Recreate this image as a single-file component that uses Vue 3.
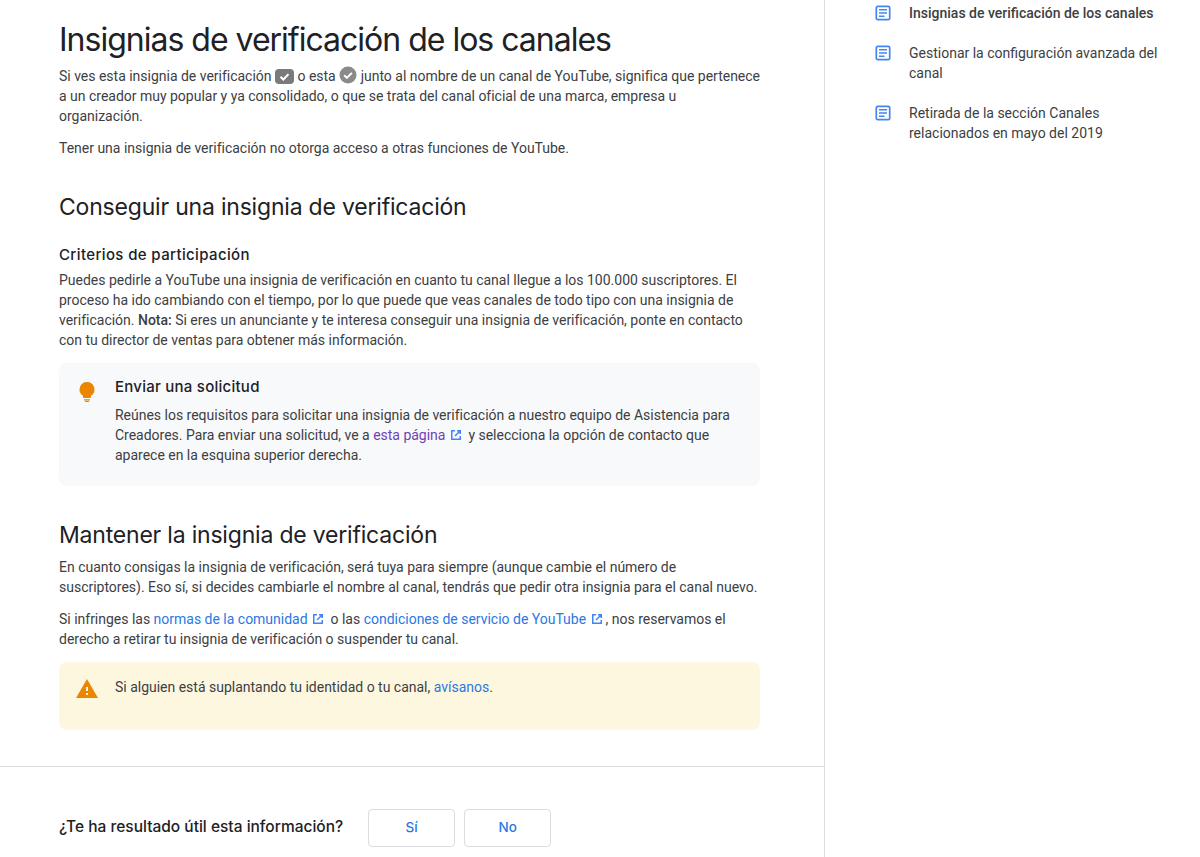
<script setup>
const related = [
  { text: 'Insignias de verificación de los canales', current: true },
  { text: 'Gestionar la configuración avanzada del canal', current: false },
  { text: 'Retirada de la sección Canales relacionados en mayo del 2019', current: false }
]
</script>

<template>
  <div class="page">
    <main class="main">
      <article class="article">
        <h1>Insignias de verificación de los canales</h1>
        <p class="intro">
          Si ves esta insignia de verificación
          <svg class="badge" width="19" height="15" viewBox="0 0 19 15"><rect width="19" height="15" rx="4" fill="#7a7a7a"/><path d="M5.500 7.700l2.800 2.800 5.200-5.400" fill="none" stroke="#fff" stroke-width="2"/></svg>
          o esta
          <svg class="badge" width="18" height="18" viewBox="0 0 18 18"><circle cx="9" cy="9" r="8.500" fill="#8a8a8a"/><path d="M5.200 9.200l2.700 2.700 5-5" fill="none" stroke="#fff" stroke-width="2"/></svg>
          junto al nombre de un canal de YouTube, significa que pertenece a un creador muy popular y ya consolidado, o que se trata del canal oficial de una marca, empresa u organización.
        </p>
        <p class="tight">Tener una insignia de verificación no otorga acceso a otras funciones de YouTube.</p>

        <h2 class="first-h2">Conseguir una insignia de verificación</h2>
        <h3>Criterios de participación</h3>
        <p class="tight">Puedes pedirle a YouTube una insignia de verificación en cuanto tu canal llegue a los 100.000 suscriptores. El proceso ha ido cambiando con el tiempo, por lo que puede que veas canales de todo tipo con una insignia de verificación. <strong>Nota:</strong> Si eres un anunciante y te interesa conseguir una insignia de verificación, ponte en contacto con tu director de ventas para obtener más información.</p>

        <section class="callout tip">
          <svg class="callout-icon" width="24" height="24" viewBox="0 0 24 24"><path fill="#ea8600" d="M12 3a7.500 7.500 0 0 0-4 13.800V18a1 1 0 0 0 1 1h6a1 1 0 0 0 1-1v-1.200A7.500 7.500 0 0 0 12 3zM9 20.200h6V21.400H9zM10 22h4v1h-4z"/></svg>
          <div class="callout-body">
            <h4>Enviar una solicitud</h4>
            <p>Reúnes los requisitos para solicitar una insignia de verificación a nuestro equipo de Asistencia para Creadores. Para enviar una solicitud, ve a <a class="visited">esta página<svg class="ext" width="12" height="12" viewBox="0 0 12 12"><path fill="none" stroke="#4285f4" stroke-width="1.500" d="M5 1.750H1.750v8.500h8.500V7M7 1.750h3.250V5M10.250 1.750L5 7"/></svg></a> y selecciona la opción de contacto que aparece en la esquina superior derecha.</p>
          </div>
        </section>

        <h2 class="second-h2">Mantener la insignia de verificación</h2>
        <p>En cuanto consigas la insignia de verificación, será tuya para siempre (aunque cambie el número de suscriptores). Eso sí, si decides cambiarle el nombre al canal, tendrás que pedir otra insignia para el canal nuevo.</p>
        <p class="tight">Si infringes las <a>normas de la comunidad<svg class="ext" width="12" height="12" viewBox="0 0 12 12"><path fill="none" stroke="#4285f4" stroke-width="1.500" d="M5 1.750H1.750v8.500h8.500V7M7 1.750h3.250V5M10.250 1.750L5 7"/></svg></a> o las <a>condiciones de servicio de YouTube<svg class="ext" width="12" height="12" viewBox="0 0 12 12"><path fill="none" stroke="#4285f4" stroke-width="1.500" d="M5 1.750H1.750v8.500h8.500V7M7 1.750h3.250V5M10.250 1.750L5 7"/></svg></a>, nos reservamos el derecho a retirar tu insignia de verificación o suspender tu canal.</p>

        <section class="callout warn">
          <svg class="callout-icon" width="24" height="24" viewBox="0 0 24 24"><path fill="#ea8600" d="M1 21h22L12 2 1 21zm12-3h-2v-2h2v2zm0-4h-2v-4h2v4z"/></svg>
          <div class="callout-body"><p>Si alguien está suplantando tu identidad o tu canal, <a>avísanos</a>.</p></div>
        </section>
      </article>

      <footer class="feedback">
        <span class="question">¿Te ha resultado útil esta información?</span>
        <button type="button">Sí</button>
        <button type="button">No</button>
      </footer>
    </main>

    <aside class="aside">
      <ul>
        <li v-for="item in related" :key="item.text" :class="{ current: item.current }">
          <svg width="18" height="18" viewBox="0 0 18 18"><rect x="2.300" y="2.300" width="13.400" height="13.400" rx="1.500" fill="none" stroke="#4285f4" stroke-width="1.700"/><path fill="#4285f4" d="M5 5h8v1.600H5zM5 8.200h8v1.600H5zM5 11.400h5.500V13H5z"/></svg>
          <span>{{ item.text }}</span>
        </li>
      </ul>
    </aside>
  </div>
</template>

<style scoped>
.page {
  display: flex;
  height: 857px;
  overflow: hidden;
  background: #fff;
  font-family: Roboto, "Liberation Sans", sans-serif;
  font-size: 14px;
  line-height: 20px;
  color: #3c4043;
}
.main {
  width: 825px;
  flex: none;
  box-sizing: border-box;
  border-right: 1px solid #dadce0;
}
.article {
  box-sizing: border-box;
  height: 767px;
  padding: 20px 64px 0 59px;
  border-bottom: 1px solid #dadce0;
  letter-spacing: -0.01px;
}
h1 {
  margin: 0 0 6px;
  font-family: Inter, sans-serif;
  font-size: 32px;
  line-height: 40px;
  font-weight: 400;
  letter-spacing: -1px;
  color: #202124;
}
h2 {
  margin: 0;
  font-family: Inter, sans-serif;
  font-size: 23px;
  line-height: 32px;
  font-weight: 400;
  letter-spacing: -0.2px;
  color: #202124;
}
h3, h4 {
  margin: 0;
  font-family: Inter, sans-serif;
  font-size: 15px;
  line-height: 24px;
  font-weight: 500;
  letter-spacing: 0.25px;
  color: #202124;
}
p { margin: 0 0 12px; }
.intro { margin-bottom: 12px; }
.tight { margin-bottom: 0; }
.first-h2 { margin-top: 33px; }
h3 { margin-top: 20px; margin-bottom: 3px; letter-spacing: 0.37px; }
strong { font-weight: 500; }
a { color: #2b78e4; }
a.visited { color: #6f42b8; }
.badge { vertical-align: -3px; }
.ext { vertical-align: -1px; margin: 0 3px 0 4.500px; }
.callout {
  display: flex;
  box-sizing: border-box;
  border-radius: 8px;
}
.callout p { margin: 0; }
.callout-icon { flex: none; margin-left: 16px; margin-right: 16px; }
.tip {
  margin-top: 13px;
  height: 123px;
  padding-top: 12px;
  background: #f8f9fa;
}
.tip .callout-icon { margin-top: 4px; }
.tip h4 { margin-bottom: 6px; }
.warn {
  margin-top: 13px;
  height: 68px;
  padding-top: 15px;
  background: #fef7e0;
}
.second-h2 { margin-top: 33px; margin-bottom: 6px; }
.feedback {
  display: flex;
  align-items: center;
  padding: 42px 0 0 59px;
}
.question {
  font-family: Inter, sans-serif;
  font-size: 15.500px;
  line-height: 38px;
  font-weight: 500;
  color: #202124;
  margin: -2px 25px 0 0;
  white-space: nowrap;
}
button {
  width: 87px;
  height: 38px;
  margin-right: 9px;
  padding: 0 0 2px;
  background: #fff;
  border: 1px solid #dadce0;
  border-radius: 4px;
  color: #2b78e4;
  font-family: Inter, sans-serif;
  font-size: 13.500px;
  font-weight: 500;
}
.aside {
  flex: 1;
  min-width: 0;
  padding: 3px 40px 0 49px;
}
ul { list-style: none; margin: 0; padding: 0; }
li {
  display: flex;
  gap: 17px;
  margin-bottom: 20px;
}
li svg { flex: none; margin-top: 1px; }
li span { color: #3c4043; }
li.current span { font-weight: 500; }
</style>
